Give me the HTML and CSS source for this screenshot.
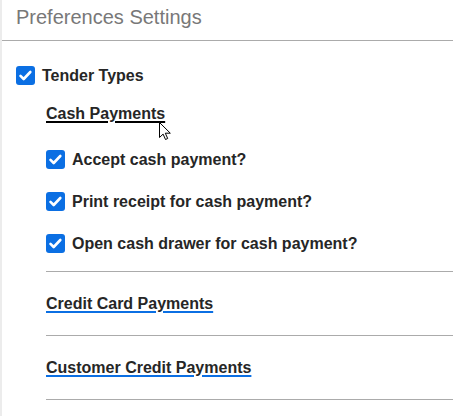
FILE: index.html
```html
<!DOCTYPE html>
<html lang="en">
<head>
  <meta charset="UTF-8" />
  <meta name="viewport" content="width=device-width, initial-scale=1.0"/>
  <title>Preferences Settings</title>
  <link rel="stylesheet" href="styles.css">
</head>
<body>
  <div class="panel">
    <h2 class="panel-title">Preferences Settings</h2>

    <label class="option option-top">
      <span class="check">
        <svg viewBox="0 0 19 19" width="19" height="19"><path d="M4.5 9.8l3.2 3.2 6.6-7" fill="none" stroke="#fff" stroke-width="2.6" stroke-linecap="round" stroke-linejoin="round"/></svg>
      </span>
      Tender Types
    </label>

    <div class="group">
      <div class="section first">
        <a href="#" class="section-link hover">Cash Payments</a>

        <div class="options">
          <label class="option">
            <span class="check">
              <svg viewBox="0 0 19 19" width="19" height="19"><path d="M4.5 9.8l3.2 3.2 6.6-7" fill="none" stroke="#fff" stroke-width="2.6" stroke-linecap="round" stroke-linejoin="round"/></svg>
            </span>
            Accept cash payment?
          </label>
          <label class="option">
            <span class="check">
              <svg viewBox="0 0 19 19" width="19" height="19"><path d="M4.5 9.8l3.2 3.2 6.6-7" fill="none" stroke="#fff" stroke-width="2.6" stroke-linecap="round" stroke-linejoin="round"/></svg>
            </span>
            Print receipt for cash payment?
          </label>
          <label class="option">
            <span class="check">
              <svg viewBox="0 0 19 19" width="19" height="19"><path d="M4.5 9.8l3.2 3.2 6.6-7" fill="none" stroke="#fff" stroke-width="2.6" stroke-linecap="round" stroke-linejoin="round"/></svg>
            </span>
            Open cash drawer for cash payment?
          </label>
        </div>

        <!-- mouse pointer as captured -->
        <svg class="cursor" viewBox="0 0 13 18" width="13" height="18">
          <path d="M0.5 0.5v15l3.6-3.4 2.4 5.4 2.2-1-2.4-5.3h5z" fill="#fff" stroke="#000" stroke-width="1" stroke-linejoin="miter"/>
        </svg>
      </div>

      <div class="section">
        <a href="#" class="section-link">Credit Card Payments</a>
      </div>

      <div class="section">
        <a href="#" class="section-link">Customer Credit Payments</a>
      </div>
    </div>
  </div>
</body>
</html>
```

FILE: styles.css
```css
body {
  margin: 0;
  font-family: 'Liberation Sans', Arial, Helvetica, sans-serif;
  color: #262626;
  background: #fff;
}

.panel {
  min-height: 416px;
  border-left: 2px solid #ececec;
  box-sizing: border-box;
}

.panel-title {
  margin: 0;
  height: 41px;
  box-sizing: border-box;
  padding: 5px 0 0 14px;
  font-size: 20px;
  line-height: 24px;
  font-weight: normal;
  color: #787878;
  border-bottom: 1px solid #ababab;
}

.option {
  display: flex;
  align-items: center;
  gap: 7px;
  height: 19px;
  font-size: 16px;
  font-weight: bold;
  cursor: pointer;
}

.option-top {
  margin: 25px 0 0 14px;
}

.check {
  width: 19px;
  height: 19px;
  border-radius: 3px;
  background: #0b6fe3;
  display: flex;
  flex: none;
}

.group {
  margin-left: 44px;
}

.section {
  position: relative;
  padding: 22px 0 21px;
  border-bottom: 1px solid #ababab;
}

.section.first {
  padding-top: 19px;
  padding-bottom: 18px;
}

.section-link {
  display: inline-block;
  font-size: 16px;
  line-height: 20px;
  font-weight: bold;
  color: #262626;
  text-decoration: underline;
  text-decoration-color: #0b6fe3;
  text-decoration-thickness: 2px;
  text-underline-offset: 2px;
}

.section-link.hover {
  text-decoration-color: #000;
}

.options {
  display: flex;
  flex-direction: column;
  gap: 23px;
  margin-top: 26px;
}

.cursor {
  position: absolute;
  left: 113px;
  top: 37px;
}
```
